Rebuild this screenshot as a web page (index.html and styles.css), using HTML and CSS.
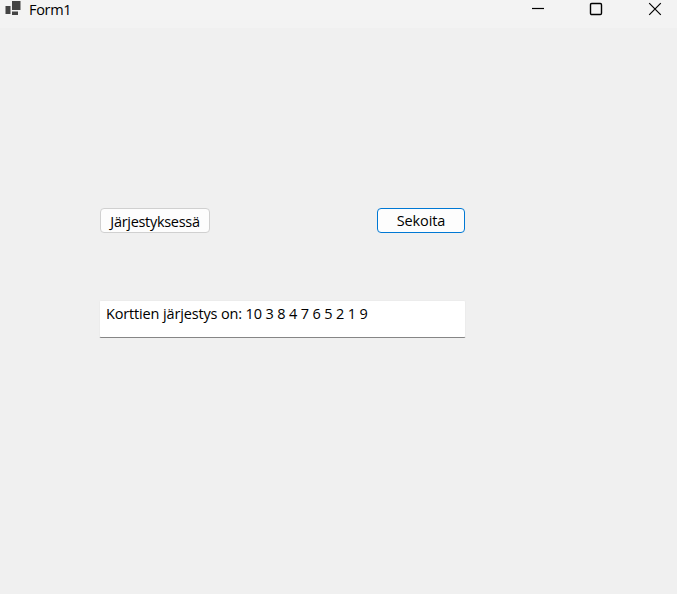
FILE: index.html
```html
<!DOCTYPE html>
<html lang="fi">
<head>
<meta charset="utf-8">
<title>Form1</title>
<link rel="stylesheet" href="styles.css">
</head>
<body>
<div class="window">
  <header class="titlebar">
    <svg class="app-icon" width="16" height="16" viewBox="0 0 16 16"><path fill="#444" d="M7 1h8.500v9H7zM.5 6H5.500v8H.5zM7 11.500h6V15H7z"/></svg>
    <span class="title">Form1</span>
    <div class="controls">
      <svg width="14" height="14" viewBox="0 0 14 14"><path d="M1 6.500h12"/></svg>
      <svg width="14" height="14" viewBox="0 0 14 14"><rect x="1.500" y="1.500" width="11" height="11" rx="1.200"/></svg>
      <svg width="14" height="14" viewBox="0 0 14 14"><path d="M1.200 1.200l11.600 11.600M12.800 1.200L1.200 12.800"/></svg>
    </div>
  </header>
  <main class="form">
    <div class="buttons">
      <button class="btn sorted">Järjestyksessä</button>
      <button class="btn shuffle">Sekoita</button>
    </div>
    <div class="output">Korttien järjestys on: 10 3 8 4 7 6 5 2 1 9</div>
  </main>
</div>
</body>
</html>
```
FILE: styles.css
```css
* { box-sizing: border-box; }
body { margin: 0; background: #f0f0f0; color: #000; font-family: "Open Sans", "Noto Sans", sans-serif; font-size: 14.5px; letter-spacing: -0.15px; }
.window { height: 594px; overflow: hidden; }
.titlebar { height: 28px; background: #f3f3f3; display: flex; align-items: flex-start; padding: 0 15px 0 5px; }
.title { margin-left: 8px; line-height: 20px; letter-spacing: -0.3px; }
.controls { margin: 2px 0 0 auto; display: flex; gap: 44px; }
.controls svg { fill: none; stroke: #000; stroke-width: 1.2; }
.controls svg:nth-child(2) { stroke-width: 1.4; margin-right: 1px; }
.form { width: 366px; margin: 180px 0 0 100px; }
.buttons { display: flex; justify-content: space-between; }
.btn { height: 25px; padding: 0; border: 1px solid #d0d0d0; border-radius: 4px; background: #fdfdfd; font: inherit; color: #000; line-height: 23px; white-space: nowrap; }
.sorted { width: 110px; letter-spacing: -0.3px; padding-top: 1px; }
.shuffle { width: 88px; border-color: #0078d4; margin-right: 1px; letter-spacing: -0.1px; }
.output { margin: 67px 0 0 -1px; height: 38px; background: #fff; border: 1px solid #ececec; border-bottom-color: #868686; border-radius: 2px; padding-left: 6px; line-height: 25px; white-space: nowrap; }
```
